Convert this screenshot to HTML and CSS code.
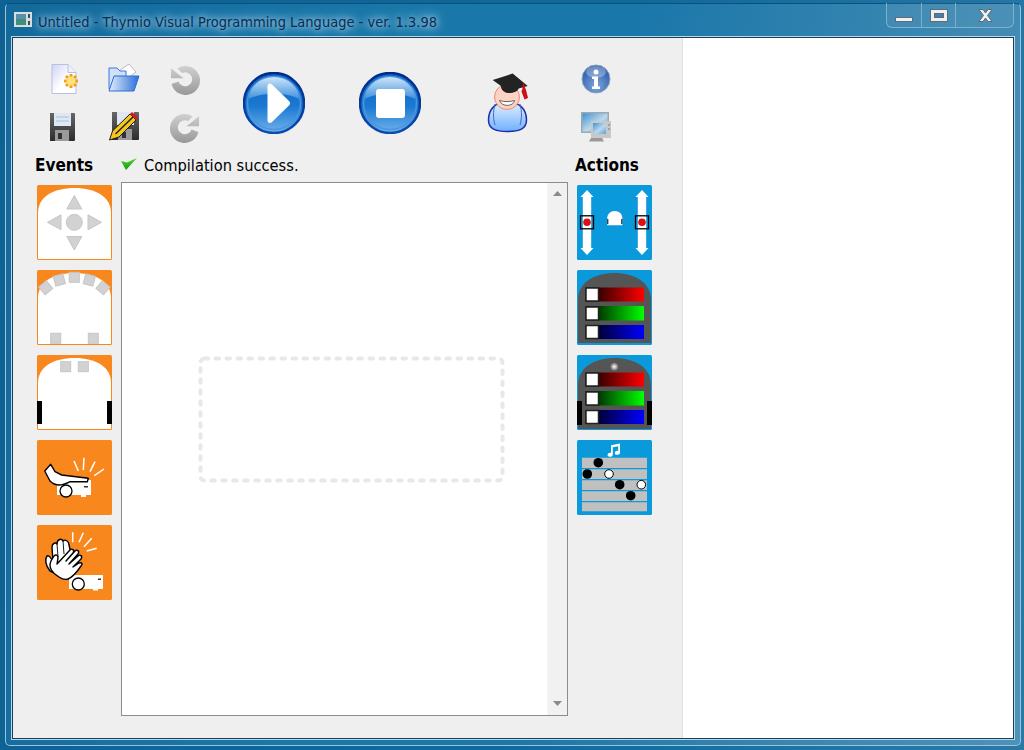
FILE: index.html
```html
<!DOCTYPE html>
<html lang="en">
<head>
<meta charset="utf-8">
<title>Untitled - Thymio Visual Programming Language - ver. 1.3.98</title>
<link rel="stylesheet" href="styles.css">
</head>
<body>
<svg class="defs" width="0" height="0" aria-hidden="true">
  <defs>
    <linearGradient id="ball" x1="0" y1="0" x2="0" y2="1"><stop offset="0" stop-color="#0b66c8"/><stop offset=".55" stop-color="#1a78d2"/><stop offset="1" stop-color="#6fb2ea"/></linearGradient>
    <linearGradient id="ringg" x1="0" y1="0" x2="0" y2="1"><stop offset="0" stop-color="#022a88"/><stop offset="1" stop-color="#0a4cb0"/></linearGradient>
    <linearGradient id="shine" x1="0" y1="0" x2="0" y2="1"><stop offset="0" stop-color="#cfe4f8"/><stop offset="1" stop-color="#3f92de"/></linearGradient>
    <linearGradient id="grey" gradientUnits="userSpaceOnUse" x1="0" y1="0" x2="0" y2="30"><stop offset="0" stop-color="#d2d2d2"/><stop offset="1" stop-color="#989898"/></linearGradient>
    <linearGradient id="paper" x1="0" y1="0" x2="1" y2="1"><stop offset="0" stop-color="#cfd3f6"/><stop offset=".55" stop-color="#fff"/><stop offset="1" stop-color="#fff"/></linearGradient>
    <linearGradient id="folder" x1="0" y1="0" x2="1" y2="0"><stop offset="0" stop-color="#e3edfb"/><stop offset="1" stop-color="#2a6fd8"/></linearGradient>
    <linearGradient id="disk" x1="0" y1="0" x2="0" y2="1"><stop offset="0" stop-color="#666"/><stop offset="1" stop-color="#2d2d2d"/></linearGradient>
    <linearGradient id="body" x1="0" y1="0" x2="0" y2="1"><stop offset="0" stop-color="#e4f0ff"/><stop offset="1" stop-color="#6fb0ff"/></linearGradient>
    <radialGradient id="info" cx=".5" cy=".75" r=".8"><stop offset="0" stop-color="#7fa8dc"/><stop offset="1" stop-color="#1c4f9f"/></radialGradient>
    <linearGradient id="screen" x1="0" y1="0" x2="1" y2="1"><stop offset="0" stop-color="#3d94d6"/><stop offset=".55" stop-color="#bcd9ec"/><stop offset="1" stop-color="#5aa4da"/></linearGradient>
    <linearGradient id="tick" x1="0" y1="0" x2="0" y2="1"><stop offset="0" stop-color="#58d82a"/><stop offset="1" stop-color="#0a9a14"/></linearGradient>
    <radialGradient id="led"><stop offset="0" stop-color="#fff"/><stop offset="1" stop-color="#6a6a6a"/></radialGradient>
    <linearGradient id="red"><stop offset="0" stop-color="#000"/><stop offset="1" stop-color="#f00"/></linearGradient>
    <linearGradient id="green"><stop offset="0" stop-color="#000"/><stop offset="1" stop-color="#0f0"/></linearGradient>
    <linearGradient id="blue"><stop offset="0" stop-color="#000"/><stop offset="1" stop-color="#00f"/></linearGradient>
  </defs>
</svg>
<div class="window">
  <div class="frame">
    <header class="titlebar">
      <svg class="app-icon" width="18" height="15" viewBox="0 0 18 15"><rect width="18" height="15" fill="#d8dde0"/><rect x="2" y="2" width="10" height="11" fill="#3f8f78"/><rect x="2" y="2" width="10" height="5" fill="#5a8fb0"/><rect x="14" y="2" width="2" height="4" fill="#30505a"/><rect x="14" y="9" width="2" height="4" fill="#30505a"/></svg>
      <span class="title-text">Untitled - Thymio Visual Programming Language - ver. 1.3.98</span>
      <div class="controls">
        <div class="ctl ctl-min"><span class="glyph-min"></span></div>
        <div class="ctl ctl-max"><span class="glyph-max"></span></div>
        <div class="ctl ctl-close">
          <svg width="17" height="15" viewBox="0 0 17 15"><path d="M2 1.500h4l2.500 3.500 2.500-3.500h4l-4.500 6 4.500 6h-4l-2.500-3.500-2.500 3.500h-4l4.500-6z" fill="#f2f2f2" stroke="#5d6a78"/></svg>
        </div>
      </div>
    </header>
    <main class="client">
      <section class="panel">
        <div class="toolbar">
          <div class="file-tools">
            <div class="tool">
              <svg width="30" height="32" viewBox="0 0 30 32"><path d="M3 2.500h16l8 8v21H3z" fill="url(#paper)" stroke="#b9c0e0"/><path d="M19 2.500v8h8" fill="#eef0fa" stroke="#b9c0e0"/><path d="M22 12v14M15 19h14M17 14l10 10M27 14L17 24" stroke="#f2a01c" stroke-width="3"/><circle cx="22" cy="19" r="4.500" fill="#ffe27a"/></svg>
            </div>
            <div class="tool">
              <svg width="32" height="30" viewBox="0 0 32 30"><path d="M8 10L21 1l7 8-8 6z" fill="#fff" stroke="#bbb"/><path d="M1 5h8l3 3h6v18H1z" fill="#cfe0f8" stroke="#3a78d8"/><path d="M6 13h25l-5 15H1z" fill="url(#folder)" stroke="#2d6fd6"/></svg>
            </div>
            <div class="tool tool-low">
              <svg width="30" height="30" viewBox="0 0 30 30"><path d="M7.500 3.500A14.500 14.500 0 1 1 1.500 19l7-2.500A7 7 0 1 0 12 8z" fill="url(#grey)"/><path d="M1 3.300v10h12.500z" fill="url(#grey)"/></svg>
            </div>
            <div class="tool">
              <svg width="28" height="30" viewBox="2 -1 28 30"><path d="M2 1h24a1 1 0 0 1 1 1v26a1 1 0 0 1-1 1H2a1 1 0 0 1-1-1V2a1 1 0 0 1 1-1z" fill="url(#disk)"/><rect x="6" y="1" width="17" height="13" fill="#dde8f2"/><path d="M8 5h13M8 9h13" stroke="#a8c0d8"/><rect x="7" y="18" width="14" height="11" fill="#9a9a9a"/><rect x="10" y="21" width="4" height="6" fill="#333"/></svg>
            </div>
            <div class="tool">
              <svg width="32" height="30" viewBox="0 0 32 30"><path d="M4 1h26a1 1 0 0 1 1 1v26a1 1 0 0 1-1 1H4V1z" fill="url(#disk)"/><rect x="9" y="1" width="17" height="13" fill="#dde8f2"/><rect x="10" y="18" width="14" height="11" fill="#9a9a9a"/><rect x="14" y="21" width="4" height="6" fill="#333"/><path d="M1.500 29L4.500 20 22 3l6 6L11 26z" fill="#f4c81e" stroke="#1a1a1a"/><path d="M7.500 23L25 6" stroke="#222" stroke-width="1.500"/><path d="M22 3l2-2 6 5-2 3z" fill="#d02020"/></svg>
            </div>
            <div class="tool tool-low">
              <svg width="30" height="30" viewBox="0 0 30 30"><g transform="translate(30 0) scale(-1 1)"><path d="M7.500 3.500A14.500 14.500 0 1 1 1.500 19l7-2.500A7 7 0 1 0 12 8z" fill="url(#grey)"/><path d="M1 3.300v10h12.500z" fill="url(#grey)"/></g></svg>
            </div>
          </div>
          <svg class="round play" width="62" height="62" viewBox="0 0 62 62"><circle cx="31" cy="31" r="30" fill="url(#ball)" stroke="url(#ringg)" stroke-width="2.500"/><circle cx="31" cy="31" r="26.500" fill="none" stroke="#4b95dc" stroke-width="1.500"/><path d="M6 27a25 22 0 0 1 50 0c-12-7-38-7-50 0z" fill="url(#shine)"/><path d="M24.500 14.500c0-3 2.500-4 4.500-2l17 16.500c1.500 1.500 1.500 3 0 4.500L29 50c-2 2-4.500 1-4.500-2z" fill="#fff"/></svg>
          <svg class="round stop" width="62" height="62" viewBox="0 0 62 62"><circle cx="31" cy="31" r="30" fill="url(#ball)" stroke="url(#ringg)" stroke-width="2.500"/><circle cx="31" cy="31" r="26.500" fill="none" stroke="#4b95dc" stroke-width="1.500"/><path d="M6 27a25 22 0 0 1 50 0c-12-7-38-7-50 0z" fill="url(#shine)"/><rect x="17" y="17" width="29" height="29" rx="3" fill="#fff"/></svg>
          <svg class="student" width="42" height="60" viewBox="0 0 42 60"><path d="M1.500 47c0-11 7-18 19-18s19 7 19 18c0 9-7 11.500-19 11.500S1.500 56 1.500 47z" fill="url(#body)" stroke="#1c2fa8" stroke-width="1.500"/><path d="M8 31c-2 8-2 14 0 21M33 31c2 8 2 14 0 21" fill="none" stroke="#3f68c8"/><circle cx="20" cy="24" r="12.500" fill="#fcd2c4" stroke="#f08a6e"/><path d="M12.500 27.500c5 1.500 10 1.500 15 0-1 6.500-13 6.500-15 0z" fill="#fff" stroke="#444" stroke-width=".8"/><path d="M5.700 7L25.700.5 40.700 13l-9 2.500c-1 3-6 5-10.700 4.500-4-.5-7-3-7-7z" fill="#232323"/><path d="M36 9l3 8 2 8-3.500 1.500-3-8 1-3z" fill="#d01010"/></svg>
          <div class="sys-tools">
            <svg width="30" height="30" viewBox="0 0 30 30"><circle cx="15" cy="15" r="14" fill="url(#info)" stroke="#8ea4c4"/><ellipse cx="15" cy="8" rx="10" ry="6" fill="#fff" opacity=".3"/><circle cx="15" cy="8" r="2.500" fill="#fff"/><path d="M11 12.500h6v10h2v2.500h-8v-2.500h2v-7.500h-2z" fill="#fff"/></svg>
            <svg width="30" height="30" viewBox="0 0 30 30"><rect x="0" y="0" width="28" height="21" fill="#a0a8ac"/><rect x="1.500" y="1.500" width="25" height="18" fill="url(#screen)"/><rect x="10" y="9" width="20" height="17" fill="#c8c8c8"/><rect x="12" y="11" width="13" height="11" fill="url(#screen)"/><path d="M27 13h2M27 17h2" stroke="#777"/><path d="M8 29.500h15l-2-3.500H10z" fill="#999"/></svg>
          </div>
        </div>
        <div class="workspace">
          <h2 class="col-label">Events</h2>
          <div class="status">
            <svg width="16" height="12" viewBox="0 0 16 12"><path d="M0 3l6 1.500L16 0 5 12z" fill="url(#tick)"/></svg>
            <span>Compilation success.</span>
          </div>
          <h2 class="col-label">Actions</h2>

          <div class="blocks">
            <svg class="block" viewBox="0 0 75 75"><rect class="or" width="75" height="75" rx="1.500"/><path class="rob" d="M1 74V28C1 12 16 3 37.500 3S74 12 74 28v46z"/><g class="pad"><circle cx="37.300" cy="37.300" r="8"/><path d="M37.300 10.500l7.500 13.500h-15zM37.300 65l7.500-13.500h-15zM10.500 37.300L24 29.800v15zM64.500 37.300L51 29.800v15z"/></g></svg>
            <svg class="block" viewBox="0 0 75 75"><rect class="or" width="75" height="75" rx="1.500"/><path class="rob" d="M1 74V28C1 12 16 3 37.500 3S74 12 74 28v46z"/><g class="pad"><rect x="32.300" y="2.300" width="10" height="10"/><rect x="17.300" y="5" width="10" height="10" transform="rotate(-15 22.300 10)"/><rect x="3.700" y="12.700" width="10" height="10" transform="rotate(-40 8.700 17.700)"/><rect x="47.300" y="5" width="10" height="10" transform="rotate(15 52.300 10)"/><rect x="61" y="12.700" width="10" height="10" transform="rotate(40 66 17.700)"/><rect x="13.700" y="63.300" width="10" height="10"/><rect x="51.300" y="63.300" width="10" height="10"/></g></svg>
            <svg class="block" viewBox="0 0 75 75"><rect class="or" width="75" height="75" rx="1.500"/><path class="rob" d="M1 74V28C1 12 16 3 37.500 3S74 12 74 28v46z"/><g class="pad"><rect x="23.700" y="6.700" width="10" height="10"/><rect x="41.300" y="6.700" width="10" height="10"/></g><rect y="46" width="5" height="23"/><rect x="70" y="46" width="5" height="23"/></svg>
            <svg class="block" viewBox="0 0 75 75"><rect class="or" width="75" height="75" rx="1.500"/><rect class="wh" x="20" y="40" width="34" height="15"/><path class="wh" d="M44 55h5v2h-5z"/><circle class="wheel" cx="29" cy="51" r="6"/><rect x="47" y="46" width="4" height="1.500" fill="#333"/><path class="hand" d="M13.700 24.300L7.700 31 13 41c3 3 6 4 9.300 4 4 0 8-2 10.700-3.300l17.300 0 1-3.400-26.600-3.300-6.700-3.300z"/><path class="ray" d="M41.300 31L37 21M46.300 30L47 17.700M53 31.700L58 21.700M57.300 35.700L67 29"/></svg>
            <svg class="block" viewBox="0 0 75 75"><rect class="or" width="75" height="75" rx="1.500"/><rect class="wh" x="32" y="50" width="34" height="14"/><path class="wh" d="M56 64h5v1.500h-5z"/><circle class="wheel" cx="41.300" cy="59" r="6"/><rect x="61" y="53.500" width="3" height="1.500" fill="#333"/><path class="hand" d="M13 46C8 40 8 34 10 31c2-1 4 2 6 6l-1-15c0-4 4-5 5-3 0-5 5-6 6-3 2-2 6 0 6 4l3 13-13 17z"/><path class="thin" d="M20 19l1 13M26 16l1 13"/><path class="hand" d="M22 52c-7-4-11-10-8-16l3-5c2-2 4-1 4 2l-1 6 13-14c2-2 5 0 3 3l-7 8 9-10c2-2 5 0 3 3l-9 10 9-8c2-2 5 0 3 3l-8 8 6-4c3-1 4 1 2 3-4 6-8 11-13 13-3 1-6 0-9-2z"/><path class="ray" d="M35.700 17.300V7.300M42 17.300L46.300 7.700M47 21.700L54.700 13.300M49.700 26L59.700 23.300"/></svg>
          </div>

          <div class="scene">
            <div class="canvas">
              <svg class="dropzone" width="307" height="127" viewBox="0 0 307 127"><rect x="2.500" y="2.500" width="302" height="122" rx="4"/></svg>
            </div>
            <div class="scrollbar">
              <svg width="9" height="5" viewBox="0 0 9 5"><path d="M4.500 0L9 5H0z" fill="#8a8a8a"/></svg>
              <svg width="9" height="5" viewBox="0 0 9 5"><path d="M4.500 5L9 0H0z" fill="#8a8a8a"/></svg>
            </div>
          </div>

          <div class="blocks">
            <svg class="block" viewBox="0 0 75 75"><rect class="bl" width="75" height="75" rx="1.500"/><path class="wh" d="M10 5l6.500 7h-2.300v51h2.300L10 70l-6.500-7h2.300V12H3.500zM65 5l6.500 7h-2.300v51h2.300L65 70l-6.500-7h2.300V12h-2.300z"/><rect class="sq" x="3.500" y="30.800" width="13" height="13"/><rect class="sq" x="58.500" y="30.800" width="13" height="13"/><circle cx="10" cy="37.300" r="3.800" fill="#e01010"/><circle cx="65" cy="37.300" r="3.800" fill="#e01010"/><path class="wh" d="M30.300 40.300V33c0-4 3-7 7.500-7s7.500 3 7.500 7v7.300z"/><path d="M30.800 34v5M44.800 34v5" stroke="#000"/></svg>
            <svg class="block" viewBox="0 0 75 75"><rect class="bl" width="75" height="75" rx="1.500"/><path class="dk" d="M1 73V30C1 12 18 3 37.500 3S74 12 74 30v43z"/><rect x="8.500" y="17.500" width="58.500" height="14" fill="url(#red)"/><rect x="8.500" y="36" width="58.500" height="14.500" fill="url(#green)"/><rect x="8.500" y="55" width="58.500" height="14" fill="url(#blue)"/><rect class="knob" x="9" y="18" width="12.500" height="13"/><rect class="knob" x="9" y="37" width="12.500" height="13"/><rect class="knob" x="9" y="55.500" width="12.500" height="13"/></svg>
            <svg class="block" viewBox="0 0 75 75"><rect class="bl" width="75" height="75" rx="1.500"/><path class="dk" d="M1 74V30C1 12 18 3 37.500 3S74 12 74 30v44z"/><circle cx="37.300" cy="11.700" r="4" fill="url(#led)"/><rect y="46" width="5" height="24"/><rect x="70" y="46" width="5" height="24"/><rect x="8.500" y="17.500" width="58.500" height="14" fill="url(#red)"/><rect x="8.500" y="36" width="58.500" height="14.500" fill="url(#green)"/><rect x="8.500" y="55" width="58.500" height="14" fill="url(#blue)"/><rect class="knob" x="9" y="18" width="12.500" height="13"/><rect class="knob" x="9" y="37" width="12.500" height="13"/><rect class="knob" x="9" y="55.500" width="12.500" height="13"/></svg>
            <svg class="block" viewBox="0 0 75 75"><rect class="bl" width="75" height="75" rx="1.500"/><path class="staff" d="M5 17.700h65V28H5zM5 29.300h65V39H5zM5 40.300h65V50H5zM5 51.300h65V61H5zM5 62.300h65v9H5z"/><path class="wh" d="M34 5.200L43 3.500v9.300a2.600 2 0 1 1-1.800-1.900V6.200l-5.400 1v7.500a2.600 2 0 1 1-1.800-1.900z"/><circle cx="21.300" cy="22.700" r="4.800"/><circle cx="10.300" cy="34" r="4.800"/><circle class="note" cx="32" cy="34" r="4.300"/><circle cx="42.700" cy="44.700" r="4.800"/><circle class="note" cx="64.300" cy="44.700" r="4.300"/><circle cx="53.700" cy="55.700" r="4.800"/></svg>
          </div>
        </div>
      </section>
      <aside class="view"></aside>
    </main>
  </div>
</div>
</body>
</html>
```
FILE: styles.css
```css
* { box-sizing: border-box; }
html, body { margin: 0; padding: 0; }
body { width: 1024px; height: 750px; overflow: hidden; font-family: "DejaVu Sans Condensed", "DejaVu Sans", sans-serif; }
.defs { position: absolute; }

.window {
  width: 1024px; height: 750px;
  display: flex;
  padding: 3px 3px 4px 5px;
  background: linear-gradient(100deg, #0d6193 0%, #0f6a9c 55%, #2a7aa8 100%);
}
.frame {
  flex: 1;
  display: flex; flex-direction: column;
  background: linear-gradient(100deg, #14699b 0%, #1a77a9 35%, #1a77a9 55%, #3f89b3 85%, #4d92b9 100%);
  border: 1px solid #9cc3da;
  border-top-color: #0c4f78;
  border-radius: 5px;
}

.titlebar { height: 34px; flex: none; display: flex; align-items: flex-start; padding-left: 8px; position: relative; }
.app-icon { margin-top: 8px; flex: none; }
.title-text {
  margin-left: 6px; margin-top: 8px;
  font-size: 14.5px; line-height: 20px; color: #0c2c55; white-space: nowrap;
  text-shadow: 0 0 6px #9ccce4, 0 0 10px #9ccce4, 0 0 14px #8cc0dc;
}
.controls {
  position: absolute; top: -1px; left: 880px;
  display: flex; width: 128px; height: 25px;
  border: 1px solid #7fb0cc; border-top: none; border-radius: 0 0 6px 6px;
  background: rgba(255,255,255,.05);
}
.ctl { display: flex; align-items: center; justify-content: center; border-right: 1px solid #7fb0cc; }
.ctl-min { width: 35px; align-items: flex-end; padding-bottom: 5px; }
.ctl-max { width: 34px; }
.ctl-close { flex: 1; border-right: none; padding-left: 1px; }
.glyph-min { width: 18px; height: 5px; background: #f0f0f0; border: 1px solid #5d6a78; }
.glyph-max { width: 18px; height: 13px; background: #f0f0f0; border: 1px solid #5d6a78; padding: 3px; display: flex; }
.glyph-max::after { content: ""; flex: 1; background: #4a7fa5; border: 1px solid #5d6a78; }

.client {
  flex: none; height: 700px; width: 1000px; margin-left: 7px;
  display: flex;
  box-shadow: 0 0 0 1px #17405c, 0 0 0 2px #bcd6e6;
}
.panel { width: 670px; flex: none; background: #efefef; border-right: 1px solid #e0e0ea; }
.view { flex: 1; background: #fff; }

.toolbar { height: 117px; padding: 16px 0 0 21px; display: flex; align-items: flex-start; }
.file-tools { width: 180px; display: grid; grid-template-columns: repeat(3, 60px); grid-auto-rows: 48px; }
.tool { display: flex; align-items: center; justify-content: center; }
.tool-low { padding: 3px 0 0 2px; }
.round { flex: none; margin-top: 18px; }
.play { margin-left: 29px; }
.stop { margin-left: 54px; }
.student { flex: none; margin: 19px 0 0 66px; }
.sys-tools { display: flex; flex-direction: column; gap: 18px; margin: 10px 0 0 52px; }

.workspace {
  display: grid;
  grid-template-columns: 75px 447px 75px;
  grid-template-rows: 27px 534px;
  column-gap: 9px;
  padding-left: 24px;
}
.col-label { margin: 0 0 0 -2px; font-size: 17px; line-height: 20px; font-weight: 700; color: #000; white-space: nowrap; }
.status { display: flex; align-items: flex-start; gap: 7px; margin-top: 1px; font-size: 16.3px; line-height: 20px; color: #000; white-space: nowrap; }
.status svg { margin-top: 2px; flex: none; }

.blocks { display: flex; flex-direction: column; gap: 10px; padding-top: 3px; }
.block { width: 75px; height: 75px; display: block; }
.or { fill: #f8881e; }
.bl { fill: #0a99db; }
.rob { fill: #fff; }
.dk { fill: #555; }
.pad > * { fill: #d2d2d2; stroke: #c6c6c6; }
.wh { fill: #fff; }
.wheel { fill: #fff; stroke: #000; stroke-width: 1.300; }
.hand { fill: #fff; stroke: #000; stroke-width: 1.400; stroke-linejoin: round; }
.thin { fill: none; stroke: #000; stroke-width: .9; }
.ray { fill: none; stroke: #fff; stroke-width: 1.500; }
.sq { fill: none; stroke: #000; stroke-width: 1.300; }
.knob { fill: #fff; stroke: #222; stroke-width: 1.500; }
.staff { fill: #c0c0c0; }
.note { fill: #fff; stroke: #000; }

.scene { display: flex; border: 1px solid #8b8b93; background: #fff; }
.canvas { flex: 1; padding: 173px 0 0 76px; }
.dropzone { display: block; }
.dropzone rect { fill: none; stroke: #e8e8e8; stroke-width: 4; stroke-dasharray: 3.500 7.500; stroke-linecap: round; }
.scrollbar {
  width: 20px; flex: none;
  background: #f1f1f1; border-left: 1px solid #f6f6f6;
  display: flex; flex-direction: column; align-items: center; justify-content: space-between;
  padding: 8px 0 9px;
}
```
